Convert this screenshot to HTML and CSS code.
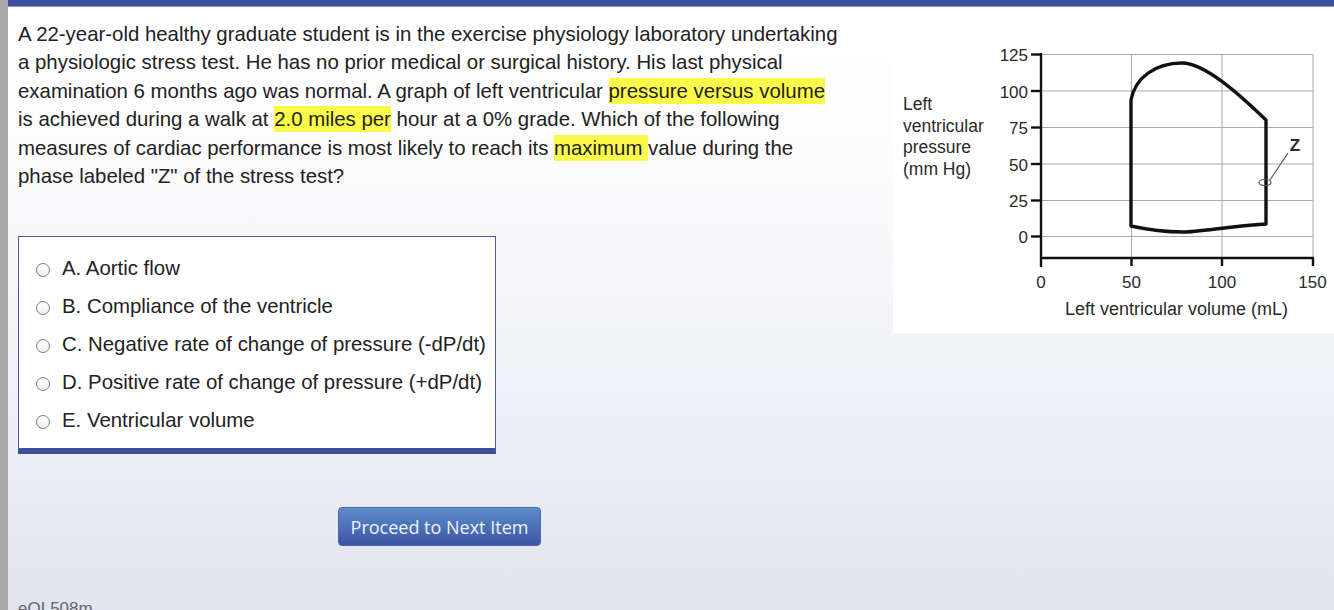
FILE: index.html
```html
<!DOCTYPE html>
<html lang="en">
<head>
<meta charset="utf-8">
<title>Question</title>
<link rel="stylesheet" href="styles.css">
</head>
<body>
<div class="app">
  <div class="sidebar"></div>
  <div class="main">
    <div class="topbar"></div>
    <div class="content">
      <div class="question-col">
        <p class="stem">A 22-year-old healthy graduate student is in the exercise physiology laboratory undertaking a physiologic stress test. He has no prior medical or surgical history. His last physical examination 6 months ago was normal. A graph of left ventricular <mark>pressure versus volume</mark> is achieved during a walk at <mark>2.0 miles per</mark> hour at a 0% grade. Which of the following measures of cardiac performance is most likely to reach its <mark>maximum </mark>value during the phase labeled "Z" of the stress test?</p>
        <div class="options">
          <label class="option"><span class="radio"></span><span class="opt-text">A. Aortic flow</span></label>
          <label class="option"><span class="radio"></span><span class="opt-text">B. Compliance of the ventricle</span></label>
          <label class="option"><span class="radio"></span><span class="opt-text">C. Negative rate of change of pressure (-dP/dt)</span></label>
          <label class="option"><span class="radio"></span><span class="opt-text">D. Positive rate of change of pressure (+dP/dt)</span></label>
          <label class="option"><span class="radio"></span><span class="opt-text">E. Ventricular volume</span></label>
        </div>
        <button class="next">Proceed to Next Item</button>
        <div class="item-code">eQL508m</div>
      </div>
      <div class="figure">
        <svg class="chart" viewBox="893 27 441 306" width="441" height="306">
          <g class="grid">
            <line x1="1041" y1="54.5" x2="1313" y2="54.5"/>
            <line x1="1041" y1="91" x2="1313" y2="91"/>
            <line x1="1041" y1="127.5" x2="1313" y2="127.5"/>
            <line x1="1041" y1="164" x2="1313" y2="164"/>
            <line x1="1041" y1="200.5" x2="1313" y2="200.5"/>
            <line x1="1041" y1="236.5" x2="1313" y2="236.5"/>
            <line x1="1131.5" y1="54" x2="1131.5" y2="258"/>
            <line x1="1222" y1="54" x2="1222" y2="258"/>
            <line x1="1313" y1="54" x2="1313" y2="258"/>
          </g>
          <g class="axes">
            <line x1="1041" y1="53" x2="1041" y2="267"/>
            <line x1="1040" y1="258" x2="1314" y2="258"/>
            <line x1="1131.5" y1="258" x2="1131.5" y2="266"/>
            <line x1="1222" y1="258" x2="1222" y2="266"/>
            <line x1="1313" y1="258" x2="1313" y2="266"/>
            <line x1="1031" y1="54.5" x2="1041" y2="54.5"/>
            <line x1="1031" y1="91" x2="1041" y2="91"/>
            <line x1="1031" y1="127.5" x2="1041" y2="127.5"/>
            <line x1="1031" y1="164" x2="1041" y2="164"/>
            <line x1="1031" y1="200.5" x2="1041" y2="200.5"/>
            <line x1="1031" y1="236.5" x2="1041" y2="236.5"/>
          </g>
          <g class="ynum">
            <text x="1028" y="61">125</text>
            <text x="1028" y="97.5">100</text>
            <text x="1028" y="134">75</text>
            <text x="1028" y="170.5">50</text>
            <text x="1028" y="207">25</text>
            <text x="1028" y="243">0</text>
          </g>
          <g class="xnum">
            <text x="1041" y="288">0</text>
            <text x="1131.5" y="288">50</text>
            <text x="1222" y="288">100</text>
            <text x="1312.5" y="288">150</text>
          </g>
          <g class="ylabel">
            <text x="903" y="110">Left</text>
            <text x="903" y="132">ventricular</text>
            <text x="903" y="153">pressure</text>
            <text x="903" y="175">(mm Hg)</text>
          </g>
          <text class="xlabel" x="1176.5" y="315">Left ventricular volume (mL)</text>
          <path class="loop" d="M1131,226 L1131,100 C1135,78 1155,63 1182,63 C1205,63 1240,95 1266,120 L1266,224 C1230,226 1200,232 1183,232 C1160,232 1140,228 1131,226 Z"/>
          <ellipse class="zmark" cx="1265" cy="182.5" rx="6" ry="3"/>
          <line class="zmark" x1="1270" y1="180" x2="1288" y2="153"/>
          <text class="zlabel" x="1295" y="151">Z</text>
        </svg>
      </div>
    </div>
  </div>
</div>
</body>
</html>
```

FILE: styles.css
```css
html, body {
  margin: 0;
  padding: 0;
  height: 100%;
  overflow: hidden;
}

body {
  font-family: "Liberation Sans", Arial, Helvetica, sans-serif;
  color: #222;
}

.app {
  display: flex;
  height: 100vh;
}

.sidebar {
  width: 8px;
  flex: none;
  background: #a8a8a8;
}

.main {
  flex: 1;
  display: flex;
  flex-direction: column;
  background: linear-gradient(#ffffff 0%, #fcfcfd 25%, #f3f4f8 55%, #e2e4ef 100%);
  overflow: hidden;
}

.topbar {
  height: 6px;
  background: #3d4f9c;
  border-bottom: 1px solid #8d98c9;
  flex: none;
}

.content {
  display: flex;
  align-items: flex-start;
  padding: 13px 0 0 10px;
}

.question-col {
  width: 850px;
  flex: none;
}

.stem {
  margin: 0;
  width: 821px;
  font-size: 20.4px;
  line-height: 28.4px;
}

.stem mark {
  background: #fdfb4a;
  color: inherit;
  padding: 2px 0;
}

.options {
  box-sizing: border-box;
  margin-top: 46px;
  width: 478px;
  background: #fff;
  border: 1px solid #4a5ca6;
  border-bottom: 6px solid #3d4f9b;
  padding: 14px 0 7px 17px;
}

.option {
  display: flex;
  align-items: center;
  height: 38px;
  font-size: 20.4px;
}

.radio {
  box-sizing: border-box;
  width: 14px;
  height: 14px;
  border: 1px solid #7d7d7d;
  border-radius: 50%;
  background: linear-gradient(#ffffff, #f0f0f0);
  margin-right: 12px;
  flex: none;
}

.opt-text {
  margin-top: -4px;
}

.next {
  display: block;
  margin: 53px 0 0 320px;
  width: 203px;
  height: 39px;
  padding: 0;
  border: 1px solid #4a66ad;
  border-radius: 4px;
  background: linear-gradient(#5d8ccb, #3e55a2);
  color: #eef2fb;
  font-family: "Open Sans", sans-serif;
  font-size: 18px;
}

.item-code {
  margin-top: 53px;
  font-size: 17px;
  line-height: 20px;
  color: #666;
}

.figure {
  margin-left: auto;
  margin-top: 7px;
  width: 441px;
  height: 306px;
  background: #fff;
}

.chart {
  display: block;
}

.chart text {
  font-family: "Liberation Sans", Arial, Helvetica, sans-serif;
  fill: #2a2a2a;
}

.grid line {
  stroke: #a9a9a9;
  stroke-width: 1;
}

.axes line {
  stroke: #111;
  stroke-width: 2.4;
}

.ynum text {
  font-size: 17px;
  text-anchor: end;
}

.xnum text {
  font-size: 17px;
  text-anchor: middle;
}

.ylabel text {
  font-size: 17.5px;
}

.xlabel {
  font-size: 18px;
  text-anchor: middle;
}

.loop {
  fill: none;
  stroke: #111;
  stroke-width: 3.4;
  stroke-linejoin: round;
}

.zmark {
  fill: none;
  stroke: #555;
  stroke-width: 1.2;
}

.chart .zlabel {
  font-size: 17px;
  font-weight: bold;
  text-anchor: middle;
}
```
